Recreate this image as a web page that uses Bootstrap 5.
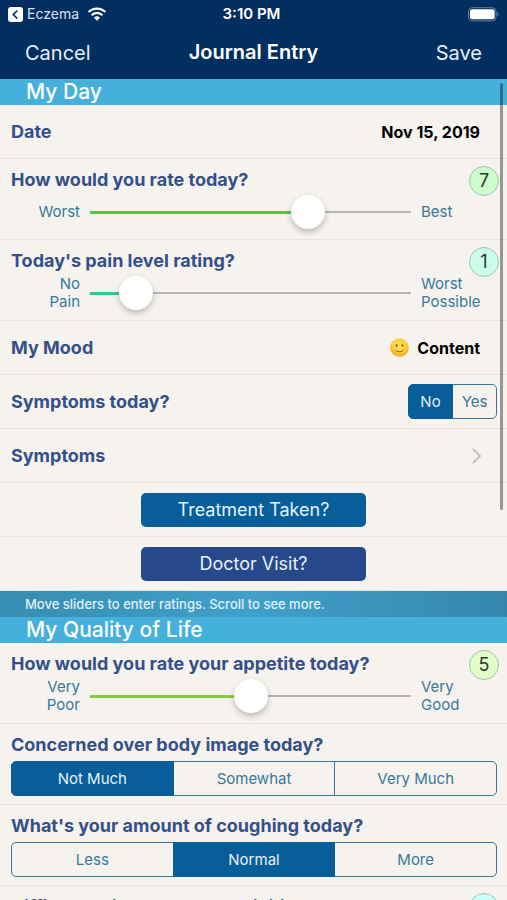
<!DOCTYPE html>
<html lang="en">
<head>
<meta charset="utf-8">
<meta name="viewport" content="width=device-width, initial-scale=1">
<title>Journal Entry</title>
<link href="https://cdn.jsdelivr.net/npm/bootstrap@5.3.0/dist/css/bootstrap.min.css" rel="stylesheet">
<style>
  :root { --navy: #022e60; --sky: #46b0dc; --paper: #f6f3ee; --ink: #34508a; --teal: #36799b; --blue: #075e98; --indigo: #27488a; }
  body { font-family: Inter, "Liberation Sans", sans-serif; background: var(--paper); color: #000; }
  .topbar { background: var(--navy); color: #fff; }
  .statusbar { height: 28px; font-size: 14px; line-height: 28px; }
  .status-back { color: #d5e4f5; }
  .clock { font-size: 15px; }
  .titlebar { height: 51px; padding: 0 25px 3px; }
  .titlebar h1 { font-size: 20px; line-height: 24px; font-weight: 600; }
  .plain-btn { color: #e3eefa; font-size: 20px; line-height: 24px; }
  .section-title { background: var(--sky); color: #fff; font-size: 21px; line-height: 26px; font-weight: 500; padding: 0 26px; }
  .hint { background: linear-gradient(90deg, #378db1, #40a0ca 50%, #3686ac); color: #e0f1fa; font-size: 13px; font-weight: 500; line-height: 26px; padding: 0 25px; }
  .entry { border-bottom: 1px solid #e6e4e2; padding: 0 11px; }
  .entry-line { min-height: 54px; }
  .entry-slider { min-height: 81px; padding-top: 9px; }
  .entry-choice { min-height: 81px; padding-top: 9px; }
  .question { color: var(--ink); font-size: 18px; line-height: 24px; font-weight: 700; }
  .answer { font-size: 16px; line-height: 24px; font-weight: 700; color: #000; margin-right: 16px; }
  .scale { display: grid; grid-template-columns: 69px 1fr 75px; column-gap: 10px; align-items: center; min-height: 40px; color: var(--teal); font-size: 15px; line-height: 18px; }
  .score { top: 7px; right: 8px; width: 30px; height: 30px; border: 1px solid #9fc4ae; font-size: 18px; line-height: 28px; color: #243a2c; }
  .rating { -webkit-appearance: none; appearance: none; display: block; width: 100%; height: 34px; margin: 0;
    background: linear-gradient(var(--fill), var(--fill)) left center / var(--at) 3px no-repeat, linear-gradient(#b5b3b3, #b5b3b3) center / 100% 2px no-repeat; }
  .rating::-webkit-slider-thumb { -webkit-appearance: none; width: 34px; height: 34px; border-radius: 50%; background: #fff; border: 0; box-shadow: 0 3px 6px rgba(0,0,0,.24); }
  .rating::-moz-range-thumb { width: 34px; height: 34px; border-radius: 50%; background: #fff; border: 0; box-shadow: 0 3px 6px rgba(0,0,0,.24); }
  .segments { margin-right: -1px; }
  .segments .btn { --bs-btn-color: var(--teal); --bs-btn-border-color: var(--teal); --bs-btn-active-bg: var(--blue); --bs-btn-active-border-color: var(--blue); --bs-btn-active-color: #e6f2fa; --bs-btn-border-radius: 5px; font-size: 15px; line-height: 23px; padding: 5px 0; flex: 1 1 0; }
  .segments-small { width: 89px; }
  .chevron { margin-right: 14px; }
  .action { width: 225px; color: #e6f2fa; font-size: 18px; line-height: 24px; padding: 5px 0; border: 0; border-radius: 5px; }
  .action-blue { background: var(--blue); }
  .action-indigo { background: var(--indigo); }
  .scroll-mark { top: 4px; right: 4px; width: 3px; height: 52%; background: rgba(0,0,0,.38); }
</style>
<script src="https://cdn.jsdelivr.net/npm/bootstrap@5.3.0/dist/js/bootstrap.bundle.min.js"></script>
</head>
<body>
<div class="vh-100 d-flex flex-column overflow-hidden">
  <header class="topbar flex-shrink-0">
    <div class="statusbar row g-0 px-1">
      <div class="col d-flex align-items-center status-back">
        <svg class="mx-1" width="15" height="15" viewBox="0 0 15 15" aria-hidden="true"><rect width="15" height="15" rx="3" fill="#fff"/><path d="M9.300 3.500 5.300 7.500l4 4" fill="none" stroke="#022e60" stroke-width="1.700"/></svg>
        <span>Eczema</span>
        <svg class="ms-2" width="20" height="14" viewBox="0 0 18 13" aria-hidden="true"><g fill="none" stroke="#fff" stroke-width="2.100"><path d="M1.200 4.700a11 11 0 0 1 15.600 0"/><path d="M4 7.600a7 7 0 0 1 10 0"/></g><path d="M9 12.800 6.200 9.900a4 4 0 0 1 5.600 0Z" fill="#fff"/></svg>
      </div>
      <div class="col-auto fw-semibold clock">3:10 PM</div>
      <div class="col d-flex align-items-center justify-content-end pe-1">
        <svg width="31" height="15" viewBox="0 0 32 15" aria-hidden="true"><rect x=".5" y=".5" width="28.500" height="13.500" rx="4" fill="none" stroke="#71869f"/><rect x="2" y="2" width="25.500" height="10.500" rx="2.600" fill="#fff"/><path d="M30.300 5c1.600.8 1.600 3.700 0 4.500Z" fill="#71869f"/></svg>
      </div>
    </div>
    <div class="titlebar row g-0 align-items-center">
      <div class="col"><button type="button" class="btn p-0 border-0 plain-btn">Cancel</button></div>
      <h1 class="col-auto m-0">Journal Entry</h1>
      <div class="col text-end"><button type="button" class="btn p-0 border-0 plain-btn">Save</button></div>
    </div>
  </header>

  <main class="flex-fill overflow-hidden position-relative">
    <h2 class="section-title m-0">My Day</h2>
    <div class="entry entry-line d-flex align-items-center justify-content-between">
      <span class="question">Date</span>
      <button type="button" class="btn p-0 border-0 answer">Nov 15, 2019</button>
    </div>
    <div class="entry entry-slider position-relative">
      <label class="question d-block" for="today">How would you rate today?</label>
      <div class="scale">
        <span class="text-end">Worst</span>
        <input id="today" class="rating" type="range" min="0" max="10" value="7" style="--at:70%;--fill:#3fcf4c">
        <span>Best</span>
      </div>
      <output class="score position-absolute rounded-circle text-center" for="today" style="background:#ccfdcb">7</output>
    </div>
    <div class="entry entry-slider position-relative">
      <label class="question d-block" for="pain">Today's pain level rating?</label>
      <div class="scale">
        <span class="text-end">No<br>Pain</span>
        <input id="pain" class="rating" type="range" min="0" max="10" value="1" style="--at:10%;--fill:#35c791">
        <span>Worst<br>Possible</span>
      </div>
      <output class="score position-absolute rounded-circle text-center" for="pain" style="background:#ccfdec">1</output>
    </div>
    <div class="entry entry-line d-flex align-items-center justify-content-between">
      <span class="question">My Mood</span>
      <button type="button" class="btn p-0 border-0 answer d-flex align-items-center">
        <svg class="me-2" width="19" height="19" viewBox="0 0 19 19" aria-hidden="true"><defs><radialGradient id="face" cx=".5" cy=".4" r=".6"><stop offset="0" stop-color="#ffe45a"/><stop offset=".65" stop-color="#fdcb38"/><stop offset="1" stop-color="#f09a1c"/></radialGradient></defs><circle cx="9.500" cy="9.500" r="9.300" fill="url(#face)"/><ellipse cx="6.700" cy="7.400" rx=".9" ry="1.500" fill="#8a641c"/><ellipse cx="12.300" cy="7.400" rx=".9" ry="1.500" fill="#8a641c"/><path d="M5.800 12.500c2 1.700 5.400 1.700 7.400 0" fill="none" stroke="#9a6a1c" stroke-width="1" stroke-linecap="round"/></svg>
        <span>Content</span>
      </button>
    </div>
    <div class="entry entry-line d-flex align-items-center justify-content-between">
      <span class="question" id="q-has">Symptoms today?</span>
      <div class="btn-group segments segments-small" role="group" aria-labelledby="q-has">
        <input class="btn-check" type="radio" name="has" id="has-no" checked><label class="btn" for="has-no">No</label>
        <input class="btn-check" type="radio" name="has" id="has-yes"><label class="btn" for="has-yes">Yes</label>
      </div>
    </div>
    <a href="#symptoms" class="entry entry-line d-flex align-items-center justify-content-between text-decoration-none" id="symptoms">
      <span class="question">Symptoms</span>
      <svg class="chevron" width="10" height="16" viewBox="0 0 10 16" aria-hidden="true"><path d="m1 1 7 7-7 7" fill="none" stroke="#c3c2c1" stroke-width="2"/></svg>
    </a>
    <div class="entry entry-line d-flex align-items-center justify-content-center">
      <button type="button" class="btn action action-blue">Treatment Taken?</button>
    </div>
    <div class="entry entry-line d-flex align-items-center justify-content-center">
      <button type="button" class="btn action action-indigo">Doctor Visit?</button>
    </div>
    <p class="hint m-0">Move sliders to enter ratings. Scroll to see more.</p>
    <h2 class="section-title m-0">My Quality of Life</h2>
    <div class="entry entry-slider position-relative">
      <label class="question d-block" for="appetite">How would you rate your appetite today?</label>
      <div class="scale">
        <span class="text-end">Very<br>Poor</span>
        <input id="appetite" class="rating" type="range" min="0" max="10" value="5" style="--at:50%;--fill:#86cc3f">
        <span>Very<br>Good</span>
      </div>
      <output class="score position-absolute rounded-circle text-center" for="appetite" style="background:#e2fdc6">5</output>
    </div>
    <div class="entry entry-choice">
      <div class="question" id="q-body">Concerned over body image today?</div>
      <div class="btn-group segments d-flex mt-1" role="group" aria-labelledby="q-body">
        <input class="btn-check" type="radio" name="body" id="body-1" checked><label class="btn" for="body-1">Not Much</label>
        <input class="btn-check" type="radio" name="body" id="body-2"><label class="btn" for="body-2">Somewhat</label>
        <input class="btn-check" type="radio" name="body" id="body-3"><label class="btn" for="body-3">Very Much</label>
      </div>
    </div>
    <div class="entry entry-choice">
      <div class="question" id="q-cough">What's your amount of coughing today?</div>
      <div class="btn-group segments d-flex mt-1" role="group" aria-labelledby="q-cough">
        <input class="btn-check" type="radio" name="cough" id="cough-1"><label class="btn" for="cough-1">Less</label>
        <input class="btn-check" type="radio" name="cough" id="cough-2" checked><label class="btn" for="cough-2">Normal</label>
        <input class="btn-check" type="radio" name="cough" id="cough-3"><label class="btn" for="cough-3">More</label>
      </div>
    </div>
    <div class="entry entry-slider position-relative">
      <label class="question d-block" for="activity">Difficulty with everyday activities today?</label>
      <div class="scale">
        <span></span>
        <input id="activity" class="rating" type="range" min="0" max="10" value="0" style="--at:0%;--fill:#35c7c0">
        <span></span>
      </div>
      <output class="score position-absolute rounded-circle text-center" for="activity" style="background:#ccfdfb">0</output>
    </div>
    <div class="scroll-mark position-absolute rounded-pill"></div>
  </main>
</div>
</body>
</html>
